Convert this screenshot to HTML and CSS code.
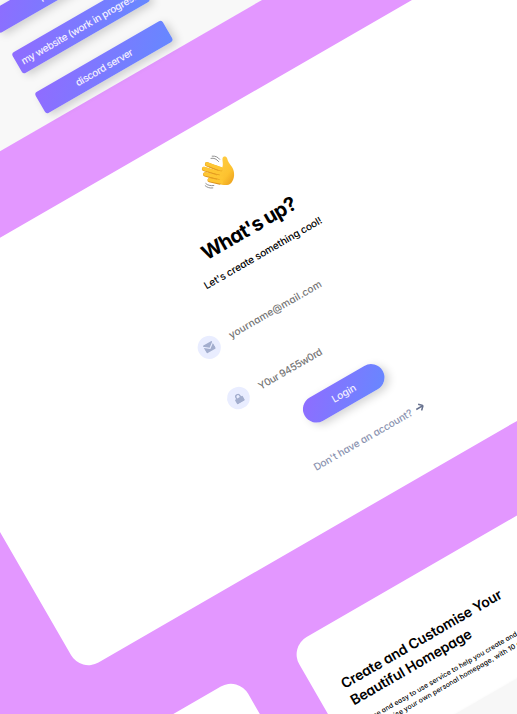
FILE: index.html
```html
<!DOCTYPE html>
<html lang="en">
<head>
<meta charset="utf-8">
<title>Showcase</title>
<link rel="stylesheet" href="styles.css">
</head>
<body>
<main class="stage">
  <section class="card links">
    <a class="link"><span class="t-port">portfolio</span></a>
    <a class="link"><span class="t-site">my website (work in progress)</span></a>
    <a class="link"><span class="t-disc">discord server</span></a>
  </section>

  <section class="card login">
    <div class="column">
      <svg class="wave" viewBox="0 0 40 40">
        <defs>
          <linearGradient id="skin" x1="0" y1="0" x2="1" y2="1">
            <stop offset="0" stop-color="#ffd04a"/>
            <stop offset=".65" stop-color="#fdc22f"/>
            <stop offset="1" stop-color="#e89a1c"/>
          </linearGradient>
        </defs>
        <g transform="rotate(30 20 20)" fill="none" stroke-linecap="round" stroke-linejoin="round">
          <path fill="url(#skin)" d="M17 13 L24 15.5 C25.4 13 24 9 24.3 6.6 C24.8 4 28 4 29 6.5 C29.6 9.5 31.5 12 33.8 15 C37 20 36.5 27 33 31 C30 34 25 33.5 20 31.5 L15 28 Z"/>
          <g stroke="#dc931c" stroke-width="4.3">
            <path d="M8.8 12.4 L22 17.7M5.8 17.1 L20 21.9M7 22.5 L20 26.3M11.4 28.2 L21 30.6"/>
          </g>
          <g stroke="#fec633" stroke-width="3.7">
            <path d="M8.8 12 L23 17M5.8 16.7 L23 21.3M7 22.1 L23 25.7M11.4 27.8 L23 30"/>
          </g>
          <path stroke="#e7a021" stroke-width=".8" d="M11 14.9 L19.5 18.3M10 20 L18.5 22.9M12 25.6 L18.5 27.4"/>
          <path stroke="#777" stroke-width=".8" d="M12.8 6.4 C16 5.8 18 7 20.4 9.6M14 4.2 C17.5 4 19.5 5 21.5 7.4M7.6 31.6 C9.5 33.4 12 34 15.6 33.6M7 33.8 C9 35.6 11.5 36.4 14.6 36"/>
        </g>
      </svg>
      <h1>What's up?</h1>
      <p class="sub">Let's create something cool!</p>
      <div class="field">
        <span class="badge"><svg viewBox="0 0 12 10"><path d="M.5 1.5Q.5.5 1.5.5h9q1 0 1 1L6 5.7.5 1.5z"/><path d="M.5 3 6 7.2 11.5 3v5.5q0 1-1 1h-9q-1 0-1-1z"/></svg></span>
        <span class="mail">yourname@mail.com</span>
      </div>
      <div class="field">
        <span class="badge"><svg viewBox="0 0 12 12"><path d="M3.5 6V4a2.5 2.5 0 0 1 5 0v2" fill="none" stroke="#a3aece" stroke-width="1.6"/><rect x="1" y="5.4" width="10" height="6.4" rx="1"/></svg></span>
        <span class="pass">Y0ur 9455w0rd</span>
      </div>
      <a class="submit">Login</a>
      <p class="signup"><span>Don't have an account?</span><svg viewBox="0 0 10 10"><path d="M.8 5h8M5.2 1.3 9 5 5.2 8.7"/></svg></p>
    </div>
  </section>

  <div class="row">
    <section class="card side"></section>
    <section class="card home">
      <h2><span class="h-a">Create and Customise Your</span><br><span class="h-b">Beautiful Homepage</span></h2>
      <p class="copy"><span class="c-a">Free and easy to use service to help you create and</span><br><span class="c-b">customise your own personal homepage, with 10 custom</span></p>
      <div class="panel"></div>
    </section>
  </div>
</main>
</body>
</html>
```
FILE: styles.css
```css
html, body {
  margin: 0;
  height: 100%;
  overflow: hidden;
  background: #e397ff;
}
body {
  font-family: Inter, "Open Sans", sans-serif;
  font-feature-settings: "cv11";
  font-weight: 450;
  color: #000;
}
.stage {
  width: 900px;
  height: 1100px;
  transform-origin: 0 0;
  transform: rotate(-30deg) translate(-400px, -140px);
}
h1, h2, p { margin: 0; white-space: nowrap; }
.card {
  box-sizing: border-box;
  background: #fff;
  border-radius: 20px;
}
.links {
  height: 270.8px;
  padding: 145.4px 0 0 382.5px;
  display: flex;
  flex-direction: column;
  gap: 22.5px;
  background: #f8f8f8;
  border-radius: 0;
}
.link, .submit {
  display: flex;
  align-items: center;
  justify-content: center;
  color: #f4f0ff;
  font-size: 10px;
  white-space: nowrap;
  background: linear-gradient(135deg, #906cff, #6688ff);
  box-shadow: 3px 4px 8px rgba(0, 0, 0, .17);
}
.link {
  flex: none;
  width: 147.6px;
  height: 24px;
  border-radius: 3px;
}
.t-port { letter-spacing: .2px; }
.t-site { letter-spacing: -.28px; }
.t-disc { letter-spacing: -.35px; }
.login {
  height: 417.1px;
  margin: 75.3px 0 0 134px;
  padding: 32px 0 0 262.2px;
}
.column {
  width: 210px;
  display: flex;
  flex-direction: column;
  align-items: center;
}
.wave {
  width: 40px;
  height: 40px;
  margin-left: 3px;
  overflow: visible;
}
h1 {
  margin-top: 29.3px;
  font-size: 20px;
  line-height: 30px;
  font-weight: 700;
  letter-spacing: -.65px;
}
.sub {
  margin-top: 4.7px;
  font-size: 10px;
  line-height: 16px;
  font-weight: 500;
  letter-spacing: -.06px;
}
.field {
  align-self: stretch;
  display: flex;
  align-items: center;
  gap: 12px;
  height: 22.6px;
  margin-top: 36px;
  color: #757575;
  font-size: 10px;
}
.mail { letter-spacing: .2px; }
.pass { letter-spacing: -.3px; }
.badge {
  display: flex;
  align-items: center;
  justify-content: center;
  width: 22.6px;
  height: 22.6px;
  border-radius: 50%;
  background: #e9edff;
}
.badge svg { width: 11.5px; height: 10.5px; fill: #a3aece; }
.submit {
  width: 90px;
  height: 27px;
  margin-top: 23.6px;
  border-radius: 13.5px;
}
.signup {
  display: flex;
  align-items: center;
  gap: 4px;
  margin-top: 28.6px;
  color: #8b93b0;
  font-size: 10px;
  line-height: 16px;
  letter-spacing: -.08px;
}
.signup svg {
  width: 9.5px;
  height: 9.5px;
  fill: none;
  stroke: #68728f;
  stroke-width: 1.6;
}
.row {
  display: flex;
  gap: 58.6px;
  height: 400px;
  margin-top: 82px;
}
.side { width: 268.2px; }
.home {
  flex: 1;
  padding: 49px 0 0 27px;
}
h2 {
  font-size: 14px;
  line-height: 19px;
  font-weight: 600;
  letter-spacing: -.1px;
}
.copy {
  margin-top: 9.5px;
  padding-left: 5px;
  font-size: 6.8px;
  line-height: 10.6px;
}
.c-a { letter-spacing: .07px; }
.c-b { letter-spacing: .12px; }
.panel {
  height: 240px;
  margin-top: 23px;
  background: #f7f7f7;
  box-shadow: 0 0 3px #f7f7f7;
}
```
